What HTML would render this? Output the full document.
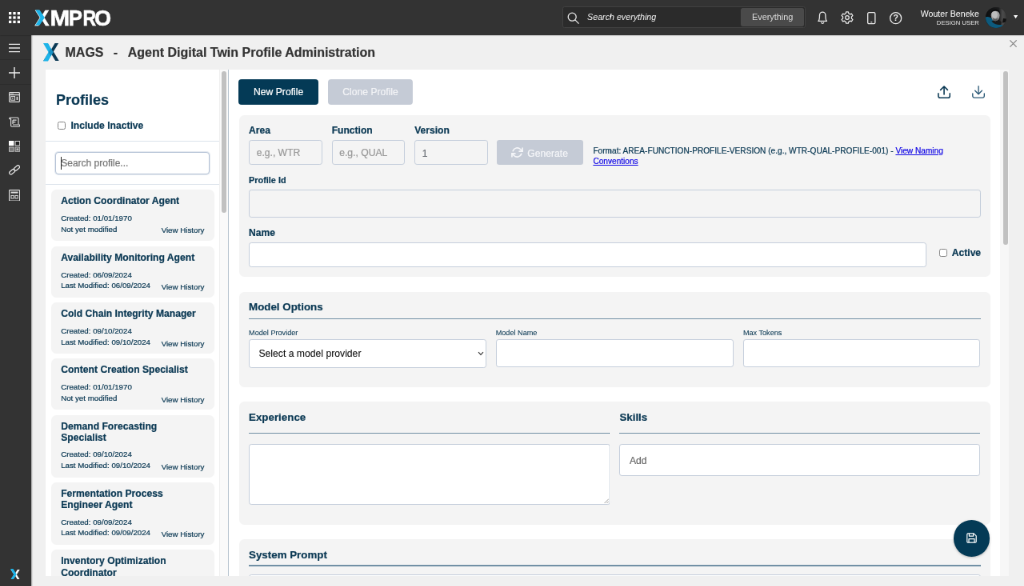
<!DOCTYPE html>
<html lang="en">
<head>
<meta charset="utf-8">
<title>MAGS - Agent Digital Twin Profile Administration</title>
<style>
*{box-sizing:border-box;margin:0;padding:0}
html,body{width:1024px;height:586px;overflow:hidden;background:#f0f0f0}
body{font-family:"Liberation Sans",sans-serif;color:#0b3954}
#root{-webkit-text-stroke:.22px;position:absolute;left:0;top:0;width:1280px;height:732.5px;transform:scale(.8);transform-origin:0 0;overflow:hidden;font-size:12px;will-change:transform}
.abs{position:absolute}
/* top bar */
#topbar{-webkit-text-stroke:0;box-shadow:0 .5px 1.5px rgba(0,0,0,.35);position:absolute;z-index:5;left:0;top:0;width:1280px;height:43.5px;background:#333333}
#sidebar{position:absolute;left:0;top:0;width:38.6px;height:732.5px;background:#333333;box-shadow:1px 0 1.5px rgba(0,0,0,.35)}
.sep{position:absolute;left:0;width:38.6px;height:1.2px;background:#2d2d2d}
.sico{position:absolute;left:11.4px;width:14px;height:14px}
#search{position:absolute;left:702.6px;top:7.6px;width:304.4px;height:27.6px;background:#2b2b2b;border:1px solid #424242;border-radius:2.5px}
#search .ph{position:absolute;left:30.5px;top:6.2px;font-style:italic;font-size:10.7px;color:#f2f2f2;white-space:nowrap}
#search .btn{position:absolute;left:222.4px;top:1.6px;width:79.4px;height:22.6px;background:#4a4a4a;border-radius:2.5px;color:#dcdcdc;font-size:10.9px;text-align:center;line-height:22.4px}
#uname{position:absolute;right:56.2px;top:10.6px;font-size:10.65px;color:#fff;white-space:nowrap}
#urole{position:absolute;right:56.2px;top:23.6px;font-size:7.7px;color:#e6e6e6;white-space:nowrap}
#avatar{position:absolute;left:1231.8px;top:9px;width:26.4px;height:26.4px;border-radius:50%;overflow:hidden;background:#222}
/* title */
#title{position:absolute;left:81.5px;top:55.9px;font-size:16px;font-weight:bold;color:#333;white-space:pre;line-height:20px}
/* panel */
#panel{position:absolute;left:56.9px;top:86.7px;width:1192.9px;height:633.3px;background:#fff;overflow:hidden}
#lcol{position:absolute;left:0;top:0;width:228.7px;height:100%;border-right:1px solid #b8c4d0;overflow:hidden}
#ltrack{position:absolute;left:217.4px;top:0;width:10.4px;height:100%;background:#fafafa;border-left:1px solid #f0f0f0}
#lthumb{position:absolute;left:220.3px;top:2.2px;width:6.3px;height:177px;border-radius:3px;background:#c1c1c1}
#rtrack{position:absolute;left:1249.8px;top:86.7px;width:11px;height:633.3px;background:#f7f7f7}
#rthumb{position:absolute;left:1254px;top:88.9px;width:5.6px;height:217px;border-radius:3px;background:#c1c1c1}
h2.pf{position:absolute;left:13.2px;top:27px;font-size:18px;line-height:22px;font-weight:bold;color:#0b3954}
.hr{position:absolute;left:0;width:217.4px;height:1.2px;background:#dde4ec}
.cb{position:absolute;width:10px;height:10px;border:1px solid #858585;border-radius:2.4px;background:#fff}
#lsearch{position:absolute;left:12.2px;top:103.3px;width:193.4px;height:28.2px;border:1.6px solid #b5c3d6;border-radius:4px;background:#fff;box-shadow:0 0 0 1px rgba(181,195,214,.35)}
#lsearch span{position:absolute;left:6.2px;top:6px;font-size:12px;color:#767676;white-space:nowrap;line-height:14px}
#lsearch i{position:absolute;left:5.6px;top:5px;width:1px;height:15.6px;background:#222}
.card{position:absolute;left:7.2px;width:203.8px;background:#f4f4f4;border-radius:6.5px}
.card b{position:absolute;left:12.1px;top:7px;font-size:12.15px;line-height:14.05px;font-weight:bold;color:#0b3954;white-space:nowrap}
.card .c1,.card .c2,.card .vh{position:absolute;font-size:9.72px;line-height:12px;color:#0b3954;white-space:nowrap}
.card .c1{left:12.1px;bottom:21.85px}
.card .c2{left:12.1px;bottom:8.1px}
.card .vh{right:12.4px;bottom:6.2px}
.t2 .c1{bottom:22.55px}.t2 .c2{bottom:8.8px}.t2 .vh{bottom:6.9px}
/* main */
.btn1{position:absolute;top:12.2px;height:32.2px;border-radius:4px;font-size:12.15px;color:#fff;text-align:center;line-height:33.6px}
.sec{position:absolute;left:242.4px;width:938.6px;background:#f4f4f4;border-radius:6.5px}
.lbl{position:absolute;font-weight:bold;font-size:12.1px;line-height:14px;color:#0b3954;white-space:nowrap}
.slbl{position:absolute;font-size:9.15px;-webkit-text-stroke:.08px;line-height:10px;color:#0b3954;white-space:nowrap}
.inp{position:absolute;border:1.5px solid #c6cfdc;border-radius:3.2px;background:#fff}
.inp.dis{background:#f4f4f4}
.inp span{position:absolute;left:8.6px;top:50%;transform:translateY(-50%);font-size:12.15px;color:#9a9a9a;white-space:nowrap}
.sec>*{margin-left:-1px}
.ttl{position:absolute;font-weight:bold;font-size:13.35px;line-height:16px;color:#0b3954;white-space:nowrap}
.ul{position:absolute;height:1.75px;background:#7190a5}
</style>
</head>
<body>
<div id="root">

<!-- TOPBAR -->
<div id="topbar">
  <svg class="abs" style="left:11px;top:14.9px" width="14" height="14" viewBox="0 0 14 14" fill="#fff"><rect x="0" y="0" width="3.3" height="3.3"/><rect x="5.35" y="0" width="3.3" height="3.3"/><rect x="10.7" y="0" width="3.3" height="3.3"/><rect x="0" y="5.35" width="3.3" height="3.3"/><rect x="5.35" y="5.35" width="3.3" height="3.3"/><rect x="10.7" y="5.35" width="3.3" height="3.3"/><rect x="0" y="10.7" width="3.3" height="3.3"/><rect x="5.35" y="10.7" width="3.3" height="3.3"/><rect x="10.7" y="10.7" width="3.3" height="3.3"/></svg>
  <svg class="abs" style="left:40px;top:6px" width="110" height="32" viewBox="0 0 110 32"><text y="25.6" font-family="Liberation Sans, sans-serif" font-weight="bold" font-size="27.6" fill="#fff" stroke="#fff" stroke-width=".55"><tspan x="3.6" textLength="18" lengthAdjust="spacingAndGlyphs">X</tspan><tspan x="22.45" textLength="24.7" lengthAdjust="spacingAndGlyphs">M</tspan><tspan x="45.7" textLength="17.2" lengthAdjust="spacingAndGlyphs">P</tspan><tspan x="63.6" textLength="16.6" lengthAdjust="spacingAndGlyphs">R</tspan><tspan x="77.9" textLength="21.1" lengthAdjust="spacingAndGlyphs">O</tspan></text><polygon points="4.2,6.6 9.6,6.6 15.8,16.1 9.6,25.6 4.2,25.6 10.4,16.1" fill="#1db4e9"/></svg>
  <div id="search">
    <svg class="abs" style="left:5.4px;top:6px" width="16" height="16" viewBox="0 0 16 16" fill="none" stroke="#e8e8e8" stroke-width="1.3"><circle cx="6.2" cy="6.2" r="5"/><path d="M9.9 9.9 L14.6 14.6"/></svg>
    <div class="ph">Search everything</div>
    <div class="btn">Everything</div>
  </div>

  <svg class="abs" style="left:1022.3px;top:13.9px" width="12.4" height="16.4" viewBox="0 0 12.4 16.4" fill="none" stroke="#ececec" stroke-width="1.3" stroke-linejoin="round" stroke-linecap="round"><path d="M.9 12.4C2.5 11 2.500 9.400 2.500 4.900a3.700 3.700 0 0 1 7.400 0c0 4.500 0 6.100 1.600 7.500z"/><path d="M4.700 14.300a1.600 1.600 0 0 0 3 0"/></svg>
  <svg class="abs" style="left:1050.7px;top:14px" width="16" height="16" viewBox="0 0 16 16" fill="none" stroke="#ececec" stroke-width="1.25" stroke-linejoin="round"><path d="M6.21 2.80 L6.61 0.83 L9.39 0.83 L9.79 2.80 L11.61 3.85 L13.51 3.21 L14.90 5.62 L13.40 6.95 L13.40 9.05 L14.90 10.38 L13.51 12.79 L11.61 12.15 L9.79 13.20 L9.39 15.17 L6.61 15.17 L6.21 13.20 L4.39 12.15 L2.49 12.79 L1.10 10.38 L2.60 9.05 L2.60 6.95 L1.10 5.62 L2.49 3.21 L4.39 3.85Z"/><circle cx="8" cy="8" r="2.3"/></svg>
  <svg class="abs" style="left:1084px;top:15.2px" width="10.6" height="15.4" viewBox="0 0 10.600 15.400" fill="none" stroke="#ececec" stroke-width="1.3"><rect x=".7" y=".7" width="9.200" height="14" rx="1.500"/><path d="M4.300 12.600h2" stroke-width="1.100"/></svg>
  <svg class="abs" style="left:1112.3px;top:15.2px" width="15.4" height="15.4" viewBox="0 0 15.400 15.400"><circle cx="7.700" cy="7.700" r="7" fill="none" stroke="#ececec" stroke-width="1.300"/><text x="7.700" y="11.500" text-anchor="middle" font-family="Liberation Sans, sans-serif" font-weight="bold" font-size="10.600" fill="#ececec">?</text></svg>
  <div id="uname">Wouter Beneke</div>
  <div id="urole">DESIGN USER</div>
  <div id="avatar"><svg width="26.4" height="26.4" viewBox="0 0 26.4 26.4"><defs><linearGradient id="ag" x1="0" x2="1" y1="0" y2="0"><stop offset="0" stop-color="#0e0f10"/><stop offset=".62" stop-color="#1c1d1e"/><stop offset=".8" stop-color="#4c4c4c"/><stop offset="1" stop-color="#3a3a3a"/></linearGradient></defs><rect width="26.4" height="26.4" fill="url(#ag)"/><path d="M0 12.400C4 11.400 7 13 9 16c3 4 7 6 12.400 6.200L20 26.400H0z" fill="#0d5a7d"/><path d="M7.400 17.500l4-1.500 2.600 2 2.600-2 3.400 2.500-1 3.500c-4 .5-9-1-11.600-4.500z" fill="#1b1b1c"/><ellipse cx="12.200" cy="10.200" rx="5.400" ry="7" fill="#9c9c9c"/><ellipse cx="11.400" cy="9.400" rx="3.600" ry="4.600" fill="#bdbdbd"/><path d="M6.200 9c-.6-8 12.600-8.600 12 .2c-1.200-3.400-3-4.400-6-4.400s-4.800 1-6 4.200z" fill="#0c0c0d"/><path d="M9 13.200q3.200 3 6.400 0l-.4 3q-2.800 2.200-5.600 0z" fill="#5a5a5a"/><path d="M22 14l4 .5v4l-5 1z" fill="#111"/></svg></div>
  <svg class="abs" style="left:1266.9px;top:19.1px" width="5.2" height="4.2" viewBox="0 0 5.2 4.2"><path d="M0 0H5.2L2.6 4.2Z" fill="#fff"/></svg>
</div>

<!-- SIDEBAR -->
<div id="sidebar">
  <div class="sep" style="top:73.8px"></div>
  <div class="sep" style="top:105.3px"></div>
  <svg class="abs" style="left:11.4px;top:53.6px" width="14" height="12" viewBox="0 0 14 12" stroke="#e6e6e6" stroke-width="1.3"><path d="M0 1.4H14M0 6H14M0 10.6H14"/></svg>
  <svg class="abs" style="left:11.4px;top:83.8px" width="14" height="14" viewBox="0 0 14 14" stroke="#f2f2f2" stroke-width="1.4"><path d="M7 0V14M0 7H14"/></svg>
  <svg class="abs" style="left:11.2px;top:115px" width="14" height="13" viewBox="0 0 14 13" fill="none" stroke="#e0e0e0" stroke-width="1.15"><rect x=".6" y=".6" width="12.8" height="11.8" rx=".8"/><path d="M.6 3.6H13.4" stroke-width="1.3"/><path d="M2 2.1H6" stroke-width=".7"/><rect x="2.6" y="5.6" width="5" height="4.6" stroke-width="1"/><path d="M4.3 6.8v2.2l1.8-1.1z" fill="#e0e0e0" stroke="none"/><rect x="9.6" y="5.8" width="1.6" height="4.2" fill="#e0e0e0" stroke="none"/></svg>
  <svg class="abs" style="left:11.2px;top:146px" width="14" height="13" viewBox="0 0 14 13" fill="none" stroke="#e0e0e0" stroke-width="1.15" stroke-linejoin="round"><path d="M2.6 1H11a1 1 0 0 1 1 1V9.6"/><path d="M2.6 1A1.4 1.4 0 0 0 .8 2.6H2.6V11a1.2 1.2 0 0 0 1.2 1.2H12.6a1.3 1.3 0 0 0 .8-2.2H5"/><path d="M5 4.2H9.6M5 6.6H8.4M5 4.2V9" stroke-width="1.2"/></svg>
  <svg class="abs" style="left:11.1px;top:175.8px" width="14.2" height="13.8" viewBox="0 0 14.2 13.8"><rect x="0" y="0" width="6.4" height="6.2" fill="#fff"/><rect x="8.1" y=".5" width="5.6" height="5.4" fill="#222" stroke="#ddd" stroke-width="1"/><rect x=".5" y="8" width="5.6" height="5.3" fill="#777" stroke="#bbb" stroke-width="1"/><rect x="8.1" y="8" width="5.6" height="5.3" fill="#666" stroke="#bbb" stroke-width="1"/><path d="M9.4 10.6h3M10.9 9.2v2.8" stroke="#ddd" stroke-width=".8"/></svg>
  <svg class="abs" style="left:11px;top:206.4px" width="14.2" height="12.8" viewBox="0 0 14.2 12.8" fill="none" stroke="#e6e6e6" stroke-width="1.25"><rect x="-3.9" y="-2" width="7.8" height="4" rx="2" transform="translate(4.2 8.83) rotate(-40)"/><rect x="-3.9" y="-2" width="7.8" height="4" rx="2" transform="translate(10 3.97) rotate(-40)"/></svg>
  <svg class="abs" style="left:11.1px;top:236.6px" width="14.2" height="14.6" viewBox="0 0 14.2 14.6" fill="none" stroke="#e0e0e0" stroke-width="1.2"><rect x=".6" y=".6" width="13" height="13.4" rx=".8"/><rect x="2.6" y="2.6" width="9" height="2" fill="#e0e0e0" stroke="none"/><rect x="3" y="7.4" width="3.2" height="3.6" stroke-width="1"/><rect x="8" y="7.4" width="3.2" height="3.6" stroke-width="1"/></svg>
  <svg class="abs" style="left:12.7px;top:710.5px" width="12.2" height="13.8" viewBox="0 0 12.2 13.8"><text x="0" y="13.7" font-family="Liberation Sans, sans-serif" font-weight="bold" font-size="18.9" fill="#fff" textLength="12.2" lengthAdjust="spacingAndGlyphs">X</text><polygon points="0,0 3.5,0 7.7,6.9 3.5,13.8 0,13.8 4.2,6.900" fill="#1db4e9"/></svg>

</div>

<svg class="abs" style="left:1262.2px;top:50.1px" width="9" height="9" viewBox="0 0 9 9" stroke="#808080" stroke-width="1.200"><path d="M.4 .4L8.600 8.600M8.600 .4L.4 8.600"/></svg>
<!-- TITLE -->
<svg class="abs" style="left:54px;top:54px" width="20" height="22.6" viewBox="0 0 20 22.6"><text x="0" y="22.1" font-family="Liberation Sans, sans-serif" font-weight="bold" font-size="30.6" fill="#0b3954" textLength="20" lengthAdjust="spacingAndGlyphs">X</text><polygon points="0,0 6,0 12.4,11.3 6,22.6 0,22.6 6.6,11.3" fill="#1db4e9"/><polygon points="6.6,11.3 9.4,6.4 12.4,11.3 9.6,16.2" fill="#1690c4"/></svg>

<div id="title">MAGS<span style="position:absolute;left:60.2px">-</span><span style="position:absolute;left:78.2px">Agent Digital Twin Profile Administration</span></div>

<!-- PANEL -->
<div id="panel">
  <div id="lcol">
    <h2 class="pf">Profiles</h2>
    <div class="cb" style="left:15.4px;top:65.8px"></div>
    <div class="lbl" style="left:31.6px;top:63.6px">Include Inactive</div>
    <div class="hr" style="top:89.3px"></div>
    <div id="lsearch"><i></i><span>Search profile...</span></div>
    <div class="hr" style="top:143.4px"></div>
    <div id="cards">
      <div class="card" style="top:150.2px;height:63.75px"><b>Action Coordinator Agent</b><span class="c1">Created: 01/01/1970</span><span class="c2">Not yet modified</span><span class="vh">View History</span></div>
      <div class="card" style="top:221.1px;height:63.75px"><b>Availability Monitoring Agent</b><span class="c1">Created: 06/09/2024</span><span class="c2">Last Modified: 06/09/2024</span><span class="vh">View History</span></div>
      <div class="card" style="top:291.4px;height:63.75px"><b>Cold Chain Integrity Manager</b><span class="c1">Created: 09/10/2024</span><span class="c2">Last Modified: 09/10/2024</span><span class="vh">View History</span></div>
      <div class="card" style="top:361.7px;height:63.75px"><b>Content Creation Specialist</b><span class="c1">Created: 01/01/1970</span><span class="c2">Not yet modified</span><span class="vh">View History</span></div>
      <div class="card t2" style="top:432.05px;height:78.2px"><b>Demand Forecasting<br>Specialist</b><span class="c1">Created: 09/10/2024</span><span class="c2">Last Modified: 09/10/2024</span><span class="vh">View History</span></div>
      <div class="card t2" style="top:516.4px;height:78.2px"><b>Fermentation Process<br>Engineer Agent</b><span class="c1">Created: 09/09/2024</span><span class="c2">Last Modified: 09/09/2024</span><span class="vh">View History</span></div>
      <div class="card t2" style="top:600.8px;height:78.2px"><b>Inventory Optimization<br>Coordinator</b><span class="c1">Created: 09/10/2024</span><span class="c2">Last Modified: 09/10/2024</span><span class="vh">View History</span></div>
    </div>
    <div id="ltrack"></div><div id="lthumb"></div>
  </div>
  <div id="main">
    <div class="btn1" style="left:241.5px;width:99.5px;background:#043a56">New Profile</div>
    <div class="btn1" style="left:353.1px;width:106.2px;background:#c5cbd6;color:#f3f4f7">Clone Profile</div>
    <svg class="abs" style="left:1115.2px;top:20.5px" width="16.1" height="16.1" viewBox="0 0 16.1 16.1" fill="none" stroke="#0b3954" stroke-width="1.6" stroke-linecap="round" stroke-linejoin="round"><path d="M8.05 11V1.2M3.7 5.4L8.05 1l4.35 4.4M.8 9.9v3.2a2.1 2.1 0 0 0 2.1 2.1h10.3a2.1 2.1 0 0 0 2.1-2.1V9.9"/></svg>
    <svg class="abs" style="left:1158.1px;top:20.5px" width="16.1" height="16.1" viewBox="0 0 16.1 16.1" fill="none" stroke="#2d5b78" stroke-width="1.35" stroke-linecap="round" stroke-linejoin="round"><path d="M8.05 .8v9.8M3.7 6.3l4.35 4.4 4.35-4.4M.8 9.9v3.2a2.1 2.1 0 0 0 2.1 2.1h10.3a2.1 2.1 0 0 0 2.1-2.1V9.9"/></svg>

    <!-- section 1 -->
    <div class="sec" style="top:57.05px;height:202.1px">
      <div class="lbl" style="left:12.75px;top:11.8px">Area</div>
      <div class="lbl" style="left:116.35px;top:11.8px">Function</div>
      <div class="lbl" style="left:219.85px;top:11.8px">Version</div>
      <div class="inp dis" style="left:12.75px;top:31.6px;width:91.6px;height:30.7px"><span>e.g., WTR</span></div>
      <div class="inp dis" style="left:116.35px;top:31.6px;width:91.6px;height:30.7px"><span>e.g., QUAL</span></div>
      <div class="inp dis" style="left:219.85px;top:31.6px;width:91.6px;height:30.7px"><span style="color:#6d7278;margin-top:1px">1</span></div>
      <div class="abs" style="left:322.8px;top:31.6px;width:107.6px;height:30.7px;border-radius:3.2px;background:#c5cbd6;color:#f5f6f9;font-size:12.15px;line-height:30.7px;white-space:nowrap">
        <svg class="abs" style="left:17.6px;top:8px" width="15" height="15" viewBox="0 0 24 24" fill="none" stroke="#f5f6f9" stroke-width="2.7" stroke-linecap="round" stroke-linejoin="round"><polyline points="22.5 3.5 22.5 9.8 16.2 9.8"/><polyline points="1.5 20.5 1.5 14.2 7.8 14.2"/><path d="M3.6 9a9 9 0 0 1 14.8-3.4L22.5 9.8M1.5 14.2l4.1 4.2A9 9 0 0 0 20.4 15"/></svg>
        <span class="abs" style="left:38.2px;top:1.4px">Generate</span>
      </div>
      <div class="abs" style="left:443.1px;top:39.4px;width:470px;font-size:10.15px;line-height:12.5px;color:#0b3954">Format: AREA-FUNCTION-PROFILE-VERSION (e.g., WTR-QUAL-PROFILE-001) - <span style="color:#1208e6;text-decoration:underline">View Naming Conventions</span></div>
      <div class="lbl" style="left:12.75px;top:74.2px;font-size:10.9px">Profile Id</div>
      <div class="inp dis" style="left:12.75px;top:93.75px;width:914.5px;height:34.2px"></div>
      <div class="lbl" style="left:12.75px;top:140px">Name</div>
      <div class="inp" style="left:12.75px;top:159.2px;width:846.9px;height:31.3px"></div>
      <div class="cb" style="left:875.75px;top:167.6px"></div>
      <div class="lbl" style="left:891.5px;top:165.4px">Active</div>
    </div>

    <!-- section 2 -->
    <div class="sec" style="top:278.05px;height:119.5px">
      <div class="ttl" style="left:12.75px;top:11.6px">Model Options</div>
      <div class="ul" style="left:12.75px;top:32.9px;width:914.5px"></div>
      <div class="slbl" style="left:12.75px;top:46.6px">Model Provider</div>
      <div class="slbl" style="left:321.4px;top:46.6px">Model Name</div>
      <div class="slbl" style="left:630.6px;top:46.6px">Max Tokens</div>
      <div class="inp" style="left:12.75px;top:58.9px;width:296.5px;height:36.4px"><span style="color:#111;left:11.4px;font-size:12.2px;-webkit-text-stroke:.1px">Select a model provider</span>
        <svg class="abs" style="right:1.4px;top:14.4px" width="8" height="6" viewBox="0 0 8 6" fill="none" stroke="#333" stroke-width="1.1"><path d="M1 1.2 L4 4.4 L7 1.2"/></svg></div>
      <div class="inp" style="left:321.4px;top:58.9px;width:297.2px;height:35.2px"></div>
      <div class="inp" style="left:630.6px;top:58.9px;width:296.6px;height:35.2px"></div>
    </div>

    <!-- section 3 -->
    <div class="sec" style="top:415.4px;height:153.7px">
      <div class="ttl" style="left:12.75px;top:12.2px">Experience</div>
      <div class="ul" style="left:12.75px;top:38.6px;width:451.5px"></div>
      <div class="ttl" style="left:476.1px;top:12.2px">Skills</div>
      <div class="ul" style="left:476.1px;top:38.6px;width:451.1px"></div>
      <div class="inp" style="left:12.75px;top:52.9px;width:451.5px;height:75.6px">
        <svg class="abs" style="right:.2px;bottom:.2px" width="6.400" height="6.400" viewBox="0 0 7 7" stroke="#8a8a8a" stroke-width=".9"><path d="M6.6 0.6 L0.6 6.6 M6.6 3.8 L3.8 6.6"/></svg></div>
      <div class="inp" style="left:476.1px;top:52.9px;width:451.1px;height:40px"><span style="left:11.6px;color:#6b6b6b;font-size:12.15px;margin-top:.9px">Add</span></div>
    </div>

    <!-- section 4 -->
    <div class="sec" style="top:587.05px;height:200px">
      <div class="ttl" style="left:12.75px;top:11.8px">System Prompt</div>
      <div class="ul" style="left:12.75px;top:32.7px;width:914.5px"></div>
      <div class="inp" style="left:12.75px;top:44.6px;width:914.5px;height:120px"></div>
    </div>

    <!-- FAB -->
    <div class="abs" style="left:1134.8px;top:563.4px;width:45.8px;height:45.8px;border-radius:50%;background:#043a56;box-shadow:0 1px 3px rgba(0,0,0,.25)">
      <svg class="abs" style="left:16.4px;top:16.4px" width="13" height="13" viewBox="0 0 13 13" fill="none" stroke="#fff" stroke-width="1.2" stroke-linejoin="round"><path d="M1.6 .8h7.6l3 3v7.2a1.2 1.2 0 0 1-1.2 1.2H2a1.2 1.2 0 0 1-1.2-1.2V2A1.2 1.2 0 0 1 2 .8z"/><path d="M3.4 .9v3.3h5.2V.9M3 12V7.6h7V12"/></svg>
    </div>
  </div>
</div>
<div id="rtrack"></div><div id="rthumb"></div>

</div>
</body>
</html>
